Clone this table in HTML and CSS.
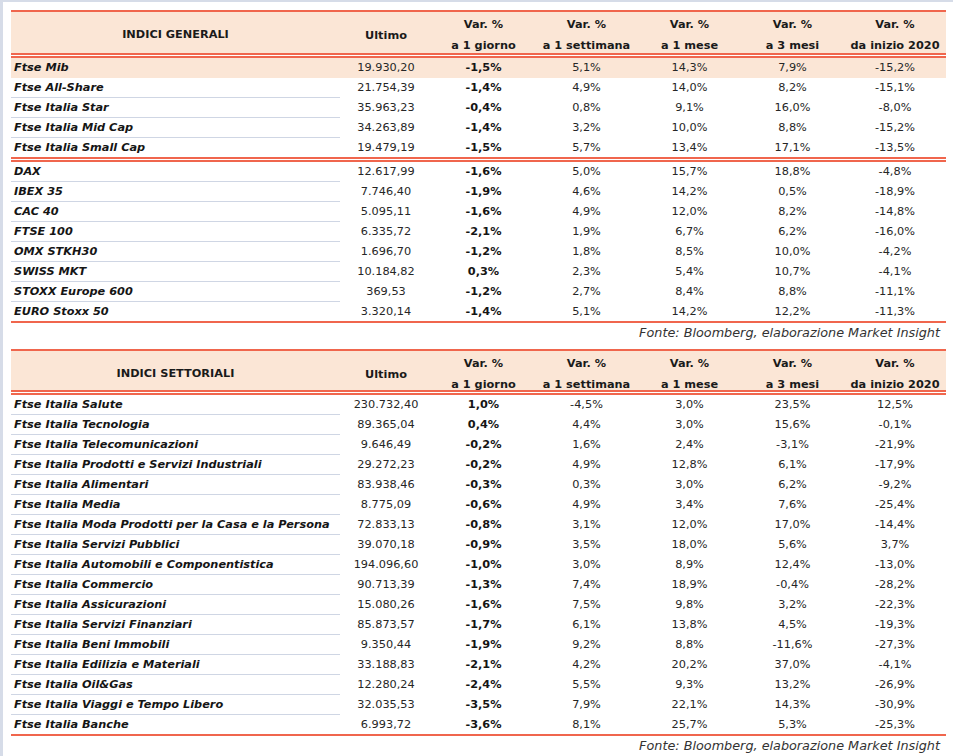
FILE: index.html
```html
<!DOCTYPE html>
<html lang="it">
<head>
<meta charset="utf-8">
<title>Indici</title>
<link rel="stylesheet" href="styles.css">
</head>
<body>
<div class="frame">
  <section class="tbl">
    <div class="head head--tall">
      <div class="hname">INDICI GENERALI</div>
      <div>Ultimo</div>
      <div>Var. %<br>a 1 giorno</div>
      <div>Var. %<br>a 1 settimana</div>
      <div>Var. %<br>a 1 mese</div>
      <div>Var. %<br>a 3 mesi</div>
      <div>Var. %<br>da inizio 2020</div>
    </div>
    <div class="divider"></div>
    <div class="row hl"><div class="name">Ftse Mib</div><div>19.930,20</div><div class="b">-1,5%</div><div>5,1%</div><div>14,3%</div><div>7,9%</div><div>-15,2%</div></div>
    <div class="row"><div class="name">Ftse All-Share</div><div>21.754,39</div><div class="b">-1,4%</div><div>4,9%</div><div>14,0%</div><div>8,2%</div><div>-15,1%</div></div>
    <div class="row"><div class="name">Ftse Italia Star</div><div>35.963,23</div><div class="b">-0,4%</div><div>0,8%</div><div>9,1%</div><div>16,0%</div><div>-8,0%</div></div>
    <div class="row"><div class="name">Ftse Italia Mid Cap</div><div>34.263,89</div><div class="b">-1,4%</div><div>3,2%</div><div>10,0%</div><div>8,8%</div><div>-15,2%</div></div>
    <div class="row last"><div class="name">Ftse Italia Small Cap</div><div>19.479,19</div><div class="b">-1,5%</div><div>5,7%</div><div>13,4%</div><div>17,1%</div><div>-13,5%</div></div>
    <div class="divider"></div>
    <div class="row"><div class="name">DAX</div><div>12.617,99</div><div class="b">-1,6%</div><div>5,0%</div><div>15,7%</div><div>18,8%</div><div>-4,8%</div></div>
    <div class="row"><div class="name">IBEX 35</div><div>7.746,40</div><div class="b">-1,9%</div><div>4,6%</div><div>14,2%</div><div>0,5%</div><div>-18,9%</div></div>
    <div class="row"><div class="name">CAC 40</div><div>5.095,11</div><div class="b">-1,6%</div><div>4,9%</div><div>12,0%</div><div>8,2%</div><div>-14,8%</div></div>
    <div class="row"><div class="name">FTSE 100</div><div>6.335,72</div><div class="b">-2,1%</div><div>1,9%</div><div>6,7%</div><div>6,2%</div><div>-16,0%</div></div>
    <div class="row"><div class="name">OMX STKH30</div><div>1.696,70</div><div class="b">-1,2%</div><div>1,8%</div><div>8,5%</div><div>10,0%</div><div>-4,2%</div></div>
    <div class="row"><div class="name">SWISS MKT</div><div>10.184,82</div><div class="b">0,3%</div><div>2,3%</div><div>5,4%</div><div>10,7%</div><div>-4,1%</div></div>
    <div class="row"><div class="name">STOXX Europe 600</div><div>369,53</div><div class="b">-1,2%</div><div>2,7%</div><div>8,4%</div><div>8,8%</div><div>-11,1%</div></div>
    <div class="row last"><div class="name">EURO Stoxx 50</div><div>3.320,14</div><div class="b">-1,4%</div><div>5,1%</div><div>14,2%</div><div>12,2%</div><div>-11,3%</div></div>
  </section>
  <p class="source">Fonte: Bloomberg, elaborazione Market Insight</p>

  <section class="tbl">
    <div class="head">
      <div class="hname">INDICI SETTORIALI</div>
      <div>Ultimo</div>
      <div>Var. %<br>a 1 giorno</div>
      <div>Var. %<br>a 1 settimana</div>
      <div>Var. %<br>a 1 mese</div>
      <div>Var. %<br>a 3 mesi</div>
      <div>Var. %<br>da inizio 2020</div>
    </div>
    <div class="divider"></div>
    <div class="row"><div class="name">Ftse Italia Salute</div><div>230.732,40</div><div class="b">1,0%</div><div>-4,5%</div><div>3,0%</div><div>23,5%</div><div>12,5%</div></div>
    <div class="row"><div class="name">Ftse Italia Tecnologia</div><div>89.365,04</div><div class="b">0,4%</div><div>4,4%</div><div>3,0%</div><div>15,6%</div><div>-0,1%</div></div>
    <div class="row"><div class="name">Ftse Italia Telecomunicazioni</div><div>9.646,49</div><div class="b">-0,2%</div><div>1,6%</div><div>2,4%</div><div>-3,1%</div><div>-21,9%</div></div>
    <div class="row"><div class="name">Ftse Italia Prodotti e Servizi Industriali</div><div>29.272,23</div><div class="b">-0,2%</div><div>4,9%</div><div>12,8%</div><div>6,1%</div><div>-17,9%</div></div>
    <div class="row"><div class="name">Ftse Italia Alimentari</div><div>83.938,46</div><div class="b">-0,3%</div><div>0,3%</div><div>3,0%</div><div>6,2%</div><div>-9,2%</div></div>
    <div class="row"><div class="name">Ftse Italia Media</div><div>8.775,09</div><div class="b">-0,6%</div><div>4,9%</div><div>3,4%</div><div>7,6%</div><div>-25,4%</div></div>
    <div class="row"><div class="name">Ftse Italia Moda Prodotti per la Casa e la Persona</div><div>72.833,13</div><div class="b">-0,8%</div><div>3,1%</div><div>12,0%</div><div>17,0%</div><div>-14,4%</div></div>
    <div class="row"><div class="name">Ftse Italia Servizi Pubblici</div><div>39.070,18</div><div class="b">-0,9%</div><div>3,5%</div><div>18,0%</div><div>5,6%</div><div>3,7%</div></div>
    <div class="row"><div class="name">Ftse Italia Automobili e Componentistica</div><div>194.096,60</div><div class="b">-1,0%</div><div>3,0%</div><div>8,9%</div><div>12,4%</div><div>-13,0%</div></div>
    <div class="row"><div class="name">Ftse Italia Commercio</div><div>90.713,39</div><div class="b">-1,3%</div><div>7,4%</div><div>18,9%</div><div>-0,4%</div><div>-28,2%</div></div>
    <div class="row"><div class="name">Ftse Italia Assicurazioni</div><div>15.080,26</div><div class="b">-1,6%</div><div>7,5%</div><div>9,8%</div><div>3,2%</div><div>-22,3%</div></div>
    <div class="row"><div class="name">Ftse Italia Servizi Finanziari</div><div>85.873,57</div><div class="b">-1,7%</div><div>6,1%</div><div>13,8%</div><div>4,5%</div><div>-19,3%</div></div>
    <div class="row"><div class="name">Ftse Italia Beni Immobili</div><div>9.350,44</div><div class="b">-1,9%</div><div>9,2%</div><div>8,8%</div><div>-11,6%</div><div>-27,3%</div></div>
    <div class="row"><div class="name">Ftse Italia Edilizia e Materiali</div><div>33.188,83</div><div class="b">-2,1%</div><div>4,2%</div><div>20,2%</div><div>37,0%</div><div>-4,1%</div></div>
    <div class="row"><div class="name">Ftse Italia Oil&amp;Gas</div><div>12.280,24</div><div class="b">-2,4%</div><div>5,5%</div><div>9,3%</div><div>13,2%</div><div>-26,9%</div></div>
    <div class="row"><div class="name">Ftse Italia Viaggi e Tempo Libero</div><div>32.035,53</div><div class="b">-3,5%</div><div>7,9%</div><div>22,1%</div><div>14,3%</div><div>-30,9%</div></div>
    <div class="row last"><div class="name">Ftse Italia Banche</div><div>6.993,72</div><div class="b">-3,6%</div><div>8,1%</div><div>25,7%</div><div>5,3%</div><div>-25,3%</div></div>
  </section>
  <p class="source">Fonte: Bloomberg, elaborazione Market Insight</p>
</div>
</body>
</html>
```

FILE: styles.css
```css
html, body {
  margin: 0;
  padding: 0;
  background: #ffffff;
}

body {
  font-family: "DejaVu Sans", "Liberation Sans", sans-serif;
  font-size: 11.3px;
  color: #262626;
}

.frame {
  border-left: 3px solid #d6dce8;
  border-top: 2px solid #d6dce8;
  padding: 8px 0 0 8px;
  min-height: 754px;
  box-sizing: border-box;
}

.tbl {
  width: 935px;
  border-top: 2px solid #f0664d;
  border-bottom: 2px solid #f0664d;
}

.head,
.row {
  display: grid;
  grid-template-columns: 329px 92px 103px 103px 103px 103px 102px;
}

.head {
  height: 39px;
  background: #fbe6d6;
  font-weight: bold;
  color: #1a1a1a;
  line-height: 21px;
  text-align: center;
}

.head--tall {
  height: 41px;
}

.head > div {
  display: flex;
  align-items: center;
  justify-content: center;
  padding-top: 2px;
}

.head > .hname {
  padding-top: 0;
}

.divider {
  height: 5px;
  box-sizing: border-box;
  border-top: 2px solid #f0664d;
  border-bottom: 2px solid #f0664d;
}

.row {
  height: 20px;
  line-height: 19px;
  text-align: center;
}

.row.last {
  height: 19px;
}

.row > div {
  white-space: nowrap;
}

.row > .name {
  text-align: left;
  padding-left: 3px;
  font-weight: bold;
  font-style: italic;
  color: #151515;
  border-bottom: 1px solid #cfd6e4;
}

.row.last > .name {
  border-bottom: 0;
}

.row.hl {
  background: #fbe6d6;
}

.row.hl > .name {
  border-bottom-color: transparent;
}

.row > .b {
  font-weight: bold;
  color: #151515;
}

.source {
  margin: 0;
  width: 935px;
  height: 26px;
  box-sizing: border-box;
  padding: 0 6px 6px 0;
  text-align: right;
  font-style: italic;
  font-size: 12.8px;
  line-height: 20px;
  color: #333333;
}
```
